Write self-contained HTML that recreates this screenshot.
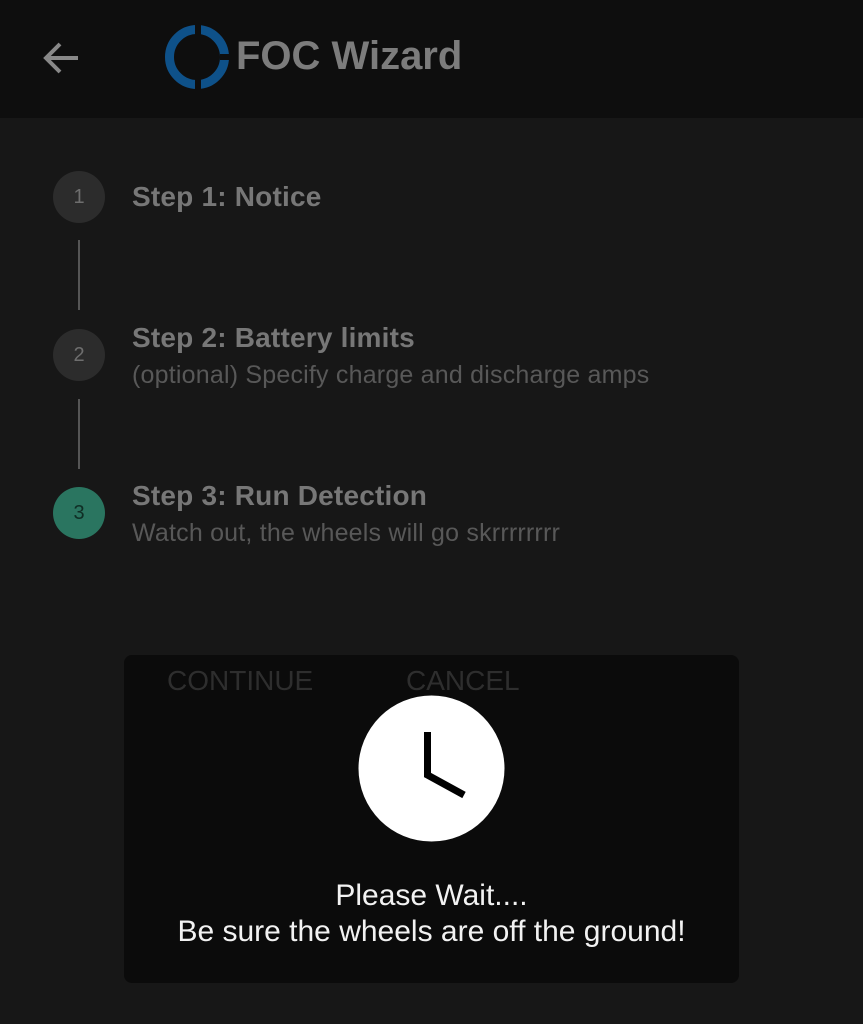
<!DOCTYPE html>
<html><head><style>
body{margin:0;width:863px;height:1024px;background:#171717;font-family:"Liberation Sans",sans-serif;position:relative;overflow:hidden}
.hdr{position:absolute;left:0;top:0;width:863px;height:118px;background:#0e0e0e}
.t{position:absolute;white-space:nowrap}
.c{position:absolute;left:53px;width:52px;height:52px;border-radius:50%;background:#2c2c2c;color:#6e6e6e;font-size:20px;text-align:center;line-height:52px}
.ln{position:absolute;left:78px;width:2px;background:#555}
.st{font-size:28px;color:#777;font-weight:bold;left:132px;letter-spacing:0.2px}
.sb{font-size:25px;color:#585858;left:132px;letter-spacing:0.2px}
</style></head><body>
<div class="hdr"></div>
<svg style="position:absolute;left:40px;top:38px" width="42" height="40" viewBox="0 0 42 40"><path d="M38 20H6M20 6L6 20l14 14" stroke="#888" stroke-width="4" fill="none"/></svg>
<svg style="position:absolute;left:164px;top:24px" width="66" height="66" viewBox="0 0 66 66"><circle cx="33" cy="33" r="27.5" stroke="#0e5189" stroke-width="9" fill="none"/><rect x="31" y="0" width="6" height="66" fill="#0e0e0e"/><rect x="56" y="30" width="10" height="6" fill="#0e0e0e"/></svg>
<div class="t" style="left:236px;top:34px;font-size:40px;color:#7c7c7c;font-weight:bold">FOC Wizard</div>

<div class="c" style="top:171px">1</div>
<div class="t st" style="top:181px">Step 1: Notice</div>
<div class="ln" style="top:240px;height:70px"></div>
<div class="c" style="top:329px">2</div>
<div class="t st" style="top:322px">Step 2: Battery limits</div>
<div class="t sb" style="top:361px">(optional) Specify charge and discharge amps</div>
<div class="ln" style="top:399px;height:70px"></div>
<div class="c" style="top:487px;background:#2a7560;color:#0f2e25">3</div>
<div class="t st" style="top:480px">Step 3: Run Detection</div>
<div class="t sb" style="top:519px">Watch out, the wheels will go skrrrrrrrr</div>

<div style="position:absolute;left:124px;top:655px;width:615px;height:328px;background:#0b0b0b;border-radius:8px"></div>
<div class="t" style="left:167px;top:665px;font-size:28px;color:#2e2e2e">CONTINUE</div>
<div class="t" style="left:406px;top:665px;font-size:28px;color:#2e2e2e">CANCEL</div>
<svg style="position:absolute;left:358px;top:695px" width="147" height="147" viewBox="0 0 147 147"><circle cx="73.5" cy="73.5" r="73" fill="#fff"/><path d="M69.5 37V80L106 100" stroke="#000" stroke-width="7" fill="none"/></svg>
<div class="t" style="left:0;width:863px;text-align:center;top:878px;font-size:30px;color:#f2f2f2;line-height:36px">Please Wait....<br>Be sure the wheels are off the ground!</div>
</body></html>
